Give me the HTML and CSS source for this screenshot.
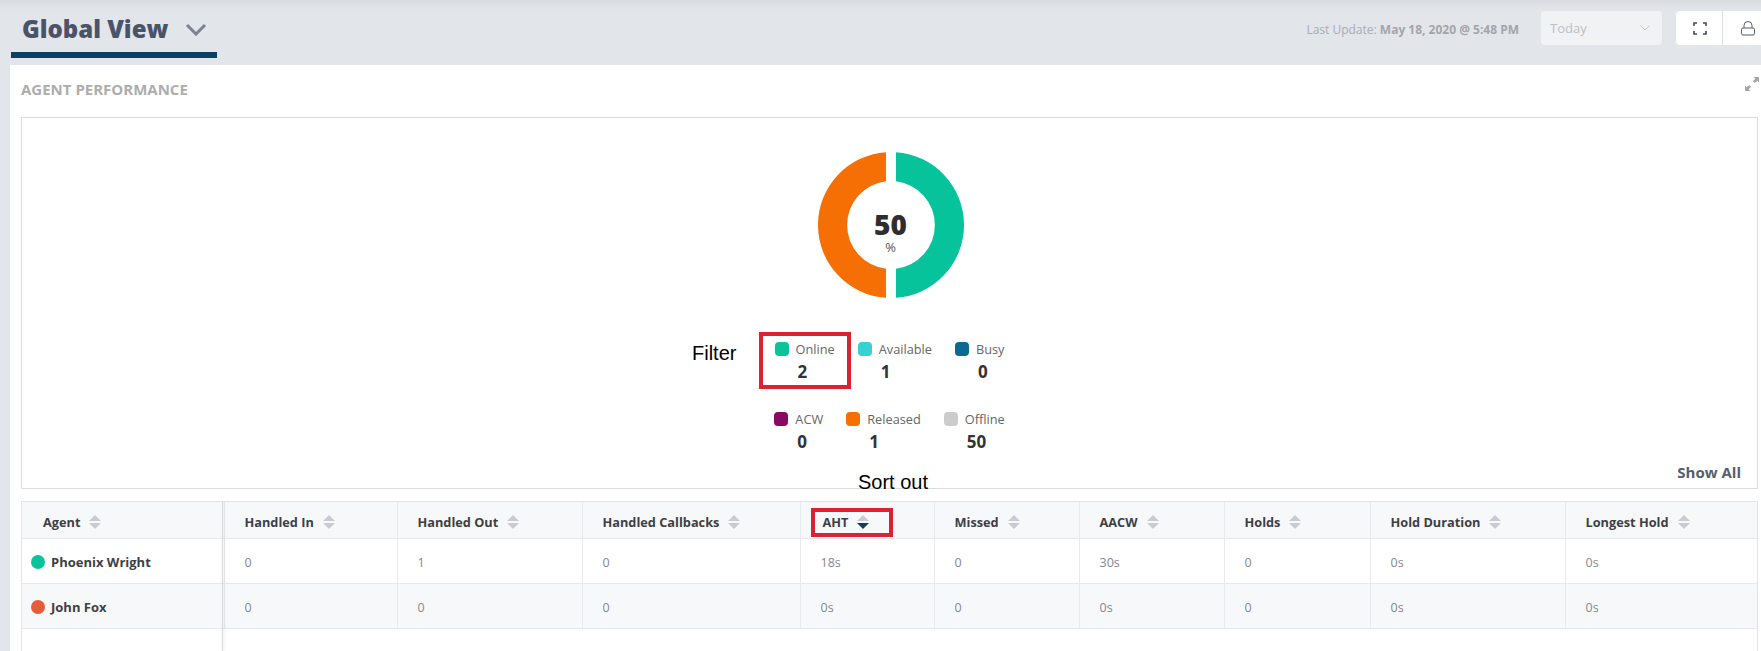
FILE: index.html
```html
<!DOCTYPE html>
<html lang="en">
<head>
  <meta charset="UTF-8">
  <title>Global View</title>
  <link rel="stylesheet" href="styles.css">
</head>
<body>
  <header class="topbar">
    <div class="view-tab">
      <h1>Global View</h1>
      <svg class="view-chevron" width="22" height="13" viewBox="0 0 22 13"><path d="M2 2l9 9 9-9" fill="none" stroke="#7b8290" stroke-width="3"/></svg>
    </div>
    <div class="toolbar">
      <p class="last-update">Last Update: <b>May 18, 2020 @ 5:48 PM</b></p>
      <div class="range-select">
        <span>Today</span>
        <svg width="10" height="6" viewBox="0 0 10 6"><path d="M.5.5L5 5 9.5.5" fill="none" stroke="#c4c7cc"/></svg>
      </div>
      <div class="btn-group">
        <button class="tool-btn tool-btn-first">
          <svg width="14" height="13" viewBox="0 0 14 13" fill="none" stroke="#444b58" stroke-width="1.6"><path d="M1 4V1h3M10 1h3v3M13 9v3h-3M4 12H1V9"/></svg>
        </button>
        <button class="tool-btn">
          <svg width="14" height="15" viewBox="0 0 14 15" fill="none" stroke="#555c68"><path d="M3 7V4.500a4 4 0 0 1 8 0V7"/><rect x=".5" y="7" width="13" height="7" rx="1.500"/></svg>
        </button>
      </div>
    </div>
  </header>

  <main class="panel">
    <div class="panel-head">
      <h2>AGENT PERFORMANCE</h2>
      <svg class="expand-icon" width="14" height="14" viewBox="0 0 14 14" fill="#a3a7ad"><path d="M8.500 0H14v5.500l-1.800-1.800-2.400 2.400-1.900-1.900 2.400-2.400zM5.500 14H0V8.500l1.800 1.800 2.400-2.400 1.900 1.900-2.400 2.400z"/></svg>
    </div>

    <section class="chart-box">
      <div class="donut">
        <svg width="146" height="146" viewBox="0 0 146 146">
          <path d="M78 .17A73 73 0 0 1 78 145.830V116.700A44 44 0 0 0 78 29.300Z" fill="#07c39b"/>
          <path d="M68 .17A73 73 0 0 0 68 145.830V116.700A44 44 0 0 1 68 29.300Z" fill="#f56f05"/>
        </svg>
        <div class="donut-label"><strong>50</strong><span>%</span></div>
      </div>

      <div class="legend-row">
        <div class="legend-item legend-marked">
          <div class="legend-name"><i class="swatch c-online"></i>Online</div>
          <div class="legend-value">2</div>
        </div>
        <div class="legend-item">
          <div class="legend-name"><i class="swatch c-available"></i>Available</div>
          <div class="legend-value">1</div>
        </div>
        <div class="legend-item">
          <div class="legend-name"><i class="swatch c-busy"></i>Busy</div>
          <div class="legend-value">0</div>
        </div>
      </div>
      <div class="legend-row">
        <div class="legend-item">
          <div class="legend-name"><i class="swatch c-acw"></i>ACW</div>
          <div class="legend-value">0</div>
        </div>
        <div class="legend-item">
          <div class="legend-name"><i class="swatch c-released"></i>Released</div>
          <div class="legend-value">1</div>
        </div>
        <div class="legend-item">
          <div class="legend-name"><i class="swatch c-offline"></i>Offline</div>
          <div class="legend-value">50</div>
        </div>
      </div>

      <div class="show-all">Show All</div>
      <span class="note note-filter">Filter</span>
      <span class="note note-sort">Sort out</span>
    </section>

    <section class="table-wrap">
      <table class="agents">
        <colgroup>
          <col class="w-agent"><col class="w-in"><col class="w-out"><col class="w-cb"><col class="w-aht">
          <col class="w-missed"><col class="w-aacw"><col class="w-holds"><col class="w-dur"><col class="w-long">
        </colgroup>
        <thead>
          <tr>
            <th><span class="th-label th-agent">Agent<i class="sort"></i></span></th>
            <th><span class="th-label">Handled In<i class="sort"></i></span></th>
            <th><span class="th-label">Handled Out<i class="sort"></i></span></th>
            <th><span class="th-label">Handled Callbacks<i class="sort"></i></span></th>
            <th><span class="th-label th-marked">AHT<i class="sort sort-desc"></i></span></th>
            <th><span class="th-label">Missed<i class="sort"></i></span></th>
            <th><span class="th-label">AACW<i class="sort"></i></span></th>
            <th><span class="th-label">Holds<i class="sort"></i></span></th>
            <th><span class="th-label">Hold Duration<i class="sort"></i></span></th>
            <th><span class="th-label">Longest Hold<i class="sort"></i></span></th>
          </tr>
        </thead>
        <tbody>
          <tr>
            <td class="agent-cell"><i class="status c-online"></i>Phoenix Wright</td>
            <td>0</td><td>1</td><td>0</td><td>18s</td><td>0</td><td>30s</td><td>0</td><td>0s</td><td>0s</td>
          </tr>
          <tr>
            <td class="agent-cell"><i class="status c-away"></i>John Fox</td>
            <td>0</td><td>0</td><td>0</td><td>0s</td><td>0</td><td>0s</td><td>0</td><td>0s</td><td>0s</td>
          </tr>
        </tbody>
      </table>
    </section>
  </main>
</body>
</html>
```

FILE: styles.css
```css
*,
*::before,
*::after {
  box-sizing: border-box;
}

html,
body {
  height: 100%;
}

body {
  margin: 0;
  display: flex;
  flex-direction: column;
  overflow: hidden;
  font-family: "Open Sans", "Noto Sans", sans-serif;
  background-color: #e2e5ea;
}

/* top bar */
.topbar {
  height: 65px;
  flex: none;
  display: flex;
  justify-content: space-between;
  padding: 0 0 0 11px;
  background: linear-gradient(#d9dce1, #e2e5ea 10px);
}

.view-tab {
  width: 206px;
  height: 58px;
  display: flex;
  align-items: center;
  padding: 6px 0 0 11px;
  border-bottom: 6px solid #0b4060;
}

.view-tab h1 {
  margin: 0;
  font-size: 24px;
  font-weight: 800;
  color: #4b5368;
  line-height: 1;
}

.view-chevron {
  margin-left: 17px;
}

.toolbar {
  display: flex;
  align-items: flex-start;
  padding-top: 11px;
}

.last-update {
  margin: 11px 22px 0 0;
  font-size: 12px;
  line-height: 15px;
  color: #a9adb3;
}

.last-update b {
  color: #a2a6ac;
}

.range-select {
  width: 121px;
  height: 34px;
  display: flex;
  align-items: center;
  justify-content: space-between;
  padding: 0 12px 0 9px;
  margin-right: 14px;
  border-radius: 4px;
  background-color: #f1f2f4;
  font-size: 13px;
  color: #bcbfc4;
}

.btn-group {
  display: flex;
  width: 85px;
  height: 34px;
  border-radius: 4px 0 0 4px;
  background-color: #ffffff;
}

.tool-btn {
  flex: 1;
  display: flex;
  align-items: center;
  padding: 0 0 0 18px;
  border: none;
  background: none;
}

.tool-btn-first {
  flex: none;
  width: 47px;
  padding-left: 17px;
  border-right: 1px solid #dcdfe3;
}

/* panel */
.panel {
  flex: 1;
  min-height: 0;
  display: flex;
  flex-direction: column;
  margin-left: 10px;
  padding: 0 3px 0 11px;
  background-color: #ffffff;
}

.panel-head {
  height: 52px;
  flex: none;
  display: flex;
  justify-content: space-between;
  padding-top: 12px;
}

.panel-head h2 {
  margin: 3px 0 0;
  font-size: 15px;
  font-weight: 700;
  line-height: 18px;
  color: #adadad;
}

.expand-icon {
  margin-right: -1px;
}

.chart-box {
  position: relative;
  height: 372px;
  flex: none;
  padding-top: 34px;
  border: 1px solid #dddddd;
}

.donut {
  position: relative;
  width: 146px;
  height: 146px;
  margin: 0 auto;
  left: 1px;
}

.donut svg {
  display: block;
}

.donut-label {
  position: absolute;
  inset: 0;
  display: flex;
  flex-direction: column;
  align-items: center;
  padding-top: 56px;
  color: #2e2e2e;
}

.donut-label strong {
  font-size: 28px;
  font-weight: 800;
  line-height: 32px;
}

.donut-label span {
  font-size: 13px;
  line-height: 15px;
  color: #555555;
}

.legend-row {
  display: flex;
  justify-content: center;
  gap: 23px;
  margin-top: 25px;
}

.donut + .legend-row {
  margin-top: 42px;
}

.legend-item {
  position: relative;
}

.legend-name {
  display: flex;
  align-items: center;
  font-size: 12.75px;
  line-height: 18px;
  color: #666666;
}

.swatch {
  width: 14px;
  height: 14px;
  margin-right: 7px;
  border-radius: 4px;
}

.legend-value {
  padding-left: 23px;
  font-size: 17px;
  font-weight: 700;
  line-height: 27px;
  color: #333333;
}

.c-online { background-color: #0bc39a; }
.c-available { background-color: #38d1d1; }
.c-busy { background-color: #0b6a94; }
.c-acw { background-color: #8a0a63; }
.c-released { background-color: #f56f05; }
.c-offline { background-color: #cccccc; }
.c-away { background-color: #e45c38; }

.legend-marked::after {
  content: "";
  position: absolute;
  left: -16px;
  top: -8px;
  width: 92px;
  height: 57px;
  border: 4px solid #d9232e;
}

.show-all {
  margin-top: 7px;
  padding-right: 16px;
  text-align: right;
  font-size: 15px;
  font-weight: 700;
  line-height: 20px;
  color: #555e6e;
}

/* notes typed over the screenshot */
.note {
  position: absolute;
  font-family: "Liberation Sans", Arial, sans-serif;
  font-size: 20px;
  line-height: 24px;
  color: #000000;
}

.note-filter {
  left: 670px;
  top: 223px;
}

.note-sort {
  left: 836px;
  top: 352px;
}

/* table */
.table-wrap {
  position: relative;
  flex: 1;
  min-height: 0;
  margin-top: 12px;
  border: 1px solid #e2e4e8;
  border-bottom: none;
}

.table-wrap::after {
  content: "";
  position: absolute;
  left: 200px;
  top: 0;
  bottom: 0;
  width: 1px;
  background-color: #d9dbdf;
  box-shadow: 1px 0 3px rgba(0, 0, 0, 0.12);
}

.agents {
  width: 100%;
  table-layout: fixed;
  border-collapse: collapse;
}

.w-agent { width: 202px; }
.w-in { width: 173px; }
.w-out { width: 185px; }
.w-cb { width: 218px; }
.w-aht { width: 134px; }
.w-missed { width: 145px; }
.w-aacw { width: 145px; }
.w-holds { width: 146px; }
.w-dur { width: 195px; }

.agents th {
  height: 36px;
  padding: 3px 0 0 20px;
  text-align: left;
  font-size: 12.75px;
  font-weight: 700;
  color: #3d3f45;
  background-color: #f7f8fa;
  border-right: 1px solid #e8eaed;
  border-bottom: 1px solid #e6e8ec;
}

.agents td {
  height: 45px;
  padding: 3px 0 0 20px;
  font-size: 12.5px;
  font-weight: 400;
  color: #85888e;
  border-right: 1px solid #e8eaed;
  border-bottom: 1px solid #e6e8ec;
}

.agents th:last-child,
.agents td:last-child {
  border-right: none;
}

.agents tbody tr:nth-child(even) {
  background-color: #f7f8fa;
}

.th-label {
  position: relative;
  display: inline-flex;
  align-items: center;
  vertical-align: middle;
  height: 20px;
}

.th-agent {
  margin-left: 1px;
}

.th-marked {
  margin-left: 2px;
}

.th-marked::after {
  content: "";
  position: absolute;
  left: -12px;
  top: -4px;
  width: 82px;
  height: 29px;
  border: 4px solid #d9232e;
}

.sort {
  display: inline-block;
  margin-left: 9px;
}

.sort::before,
.sort::after {
  content: "";
  display: block;
  width: 0;
  height: 0;
  border-left: 6px solid transparent;
  border-right: 6px solid transparent;
}

.sort::before {
  margin-bottom: 2px;
  border-bottom: 6px solid #c8cbd2;
}

.sort::after {
  border-top: 6px solid #c8cbd2;
}

.sort-desc::after {
  border-top-color: #0b4060;
}

.agents .agent-cell {
  padding-left: 9px;
  font-size: 13px;
  font-weight: 700;
  color: #3d3f45;
}

.status {
  display: inline-block;
  width: 14px;
  height: 14px;
  margin-right: 6px;
  border-radius: 50%;
  vertical-align: -2px;
}
```
